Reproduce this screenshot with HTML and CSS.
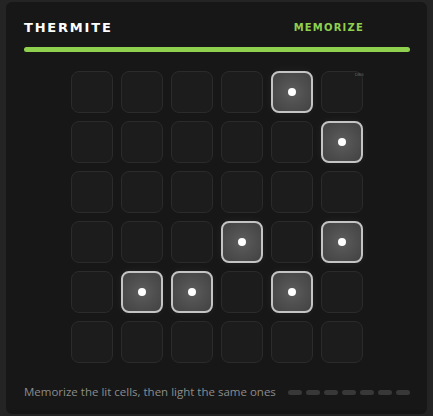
FILE: index.html
```html
<!DOCTYPE html>
<html>
<head>
<meta charset="utf-8">
<link rel="stylesheet" href="styles.css">
</head>
<body>
<div class="panel">
  <div class="header">
    <span class="title">THERMITE</span>
    <span class="phase">MEMORIZE</span>
  </div>
  <div class="bar"></div>
  <div class="grid">
    <span class="tag">DBG</span>
    <div class="cell"></div><div class="cell"></div><div class="cell"></div><div class="cell"></div><div class="cell lit"></div><div class="cell"></div>
    <div class="cell"></div><div class="cell"></div><div class="cell"></div><div class="cell"></div><div class="cell"></div><div class="cell lit"></div>
    <div class="cell"></div><div class="cell"></div><div class="cell"></div><div class="cell"></div><div class="cell"></div><div class="cell"></div>
    <div class="cell"></div><div class="cell"></div><div class="cell"></div><div class="cell lit"></div><div class="cell"></div><div class="cell lit"></div>
    <div class="cell"></div><div class="cell lit"></div><div class="cell lit"></div><div class="cell"></div><div class="cell lit"></div><div class="cell"></div>
    <div class="cell"></div><div class="cell"></div><div class="cell"></div><div class="cell"></div><div class="cell"></div><div class="cell"></div>
  </div>
  <div class="footer">
    <span class="hint">Memorize the lit cells, then light the same ones</span>
    <div class="pips">
      <span class="pip"></span><span class="pip"></span><span class="pip"></span><span class="pip"></span><span class="pip"></span><span class="pip"></span><span class="pip"></span>
    </div>
  </div>
</div>
</body>
</html>
```
FILE: styles.css
```css
html, body {
  margin: 0;
  padding: 0;
}
body {
  background: #242424;
  width: 433px;
  height: 416px;
  padding: 2px 6px;
  box-sizing: border-box;
  font-family: "DejaVu Sans", sans-serif;
}
.panel {
  width: 421px;
  height: 412px;
  background: #171717;
  border-radius: 6px;
  box-sizing: border-box;
  padding: 18px 17px 0 18px;
}
.header {
  display: flex;
  align-items: center;
  height: 16px;
}
.title {
  color: #ffffff;
  font-weight: bold;
  font-size: 13px;
  letter-spacing: 1.8px;
  line-height: 16px;
}
.phase {
  margin-left: auto;
  margin-right: 46px;
  color: #8fd14f;
  font-weight: bold;
  font-size: 10px;
  letter-spacing: 1.2px;
  line-height: 16px;
}
.bar {
  margin-top: 11px;
  height: 5px;
  border-radius: 3px;
  background: #8fd14f;
}
.grid {
  position: relative;
  margin: 19px auto 0;
  width: 292px;
  display: grid;
  grid-template-columns: repeat(6, 42px);
  grid-auto-rows: 42px;
  gap: 8px;
}
.tag {
  position: absolute;
  left: 284px;
  top: 1px;
  font-size: 4px;
  color: #6a6a6a;
  font-family: "Liberation Sans", sans-serif;
}
.cell {
  box-sizing: border-box;
  border: 1px solid #2b2b2b;
  border-radius: 8px;
  background: #1c1c1c;
}
.cell.lit {
  border: 2px solid #c4c4c4;
  background: radial-gradient(circle at center, #5e5e5e 0%, #505050 45%, #424242 100%);
  box-shadow: 0 0 8px rgba(255, 255, 255, 0.06);
  display: flex;
  align-items: center;
  justify-content: center;
}
.cell.lit::after {
  content: "";
  width: 8px;
  height: 8px;
  border-radius: 50%;
  background: #ffffff;
}
.footer {
  margin-top: 22px;
  display: flex;
  align-items: center;
  height: 14px;
}
.hint {
  font-family: "Open Sans", sans-serif;
  font-size: 11.5px;
  color: #8c8c8c;
  line-height: 14px;
}
.pips {
  margin-left: auto;
  display: flex;
  gap: 4px;
}
.pip {
  width: 14px;
  height: 5px;
  border-radius: 3px;
  background: #383838;
}
```
